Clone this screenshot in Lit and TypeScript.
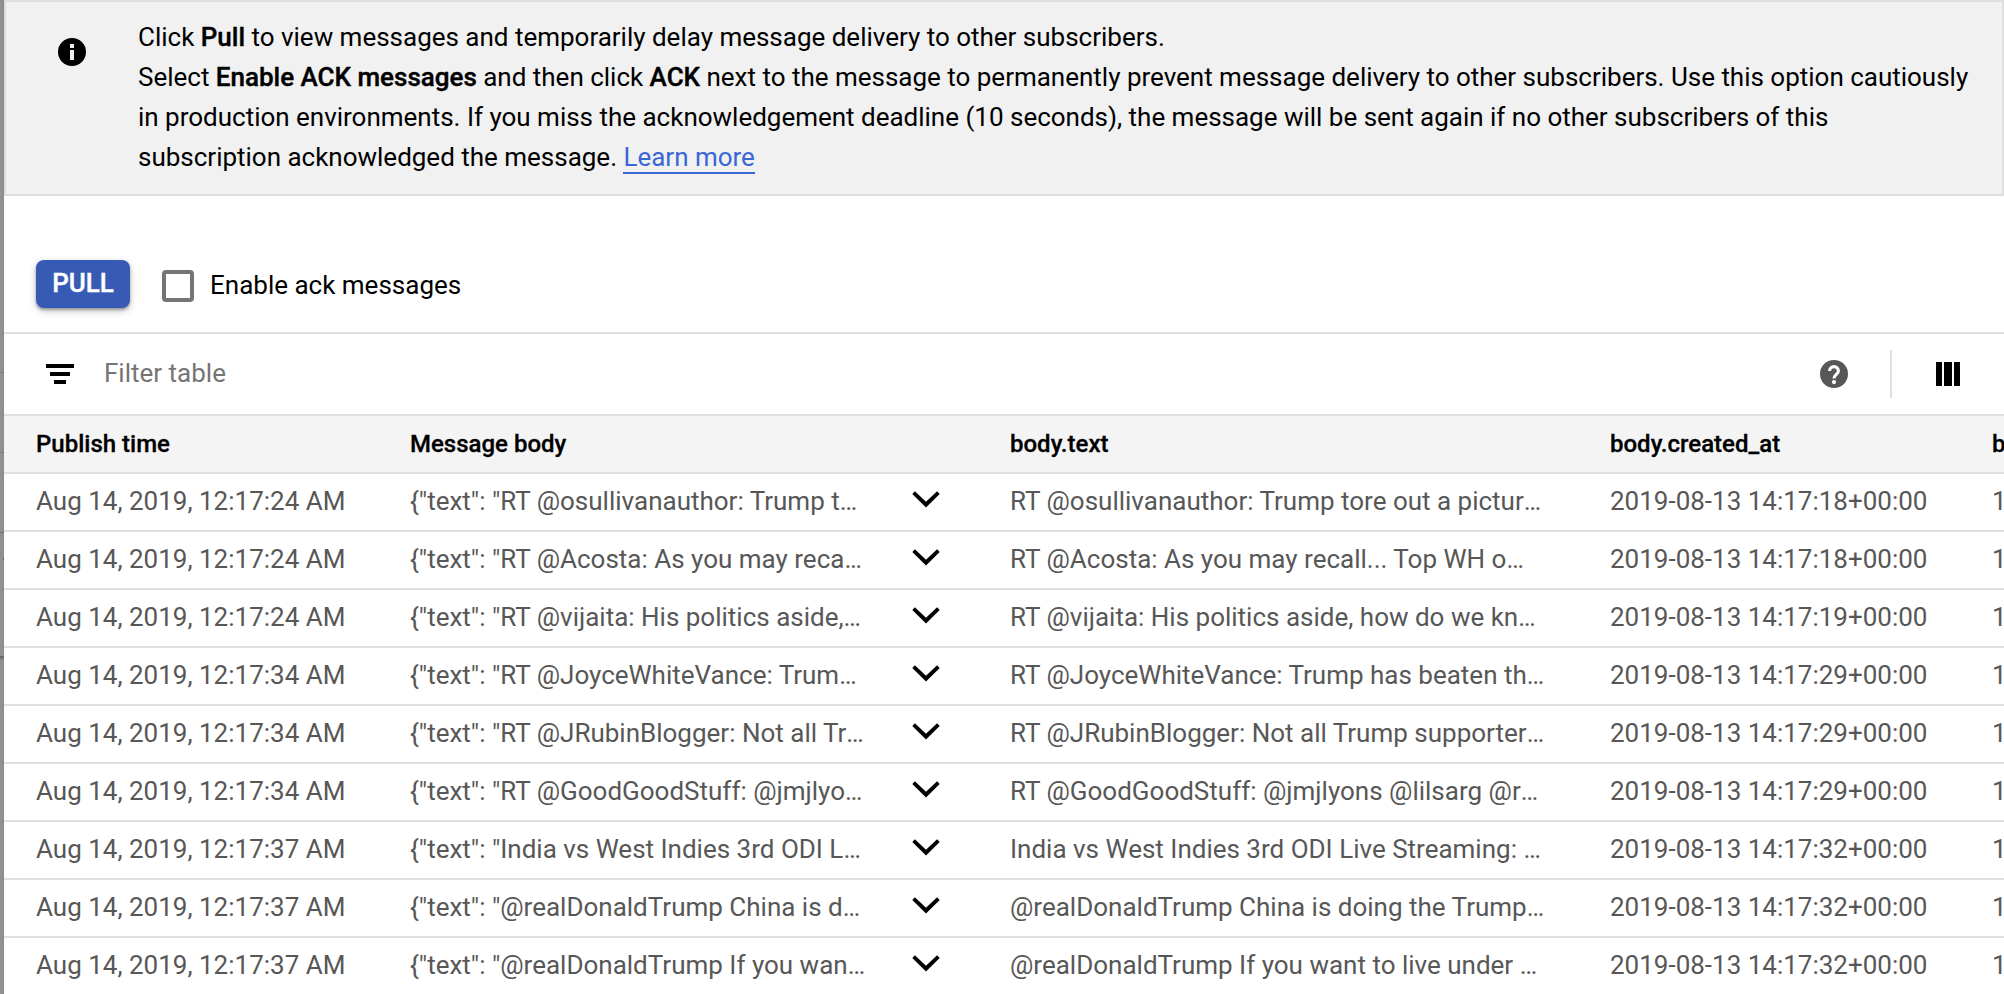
import { LitElement, html, svg, css } from "lit";
import { customElement, property } from "lit/decorators.js";

interface Message {
  time: string;
  body: string;
  text: string;
  created: string;
}

const MESSAGES: Message[] = [
  { time: "Aug 14, 2019, 12:17:24 AM", body: '{"text": "RT @osullivanauthor: Trump t', text: "RT @osullivanauthor: Trump tore out a pictur", created: "2019-08-13 14:17:18+00:00" },
  { time: "Aug 14, 2019, 12:17:24 AM", body: '{"text": "RT @Acosta: As you may reca', text: "RT @Acosta: As you may recall... Top WH o", created: "2019-08-13 14:17:18+00:00" },
  { time: "Aug 14, 2019, 12:17:24 AM", body: '{"text": "RT @vijaita: His politics aside,', text: "RT @vijaita: His politics aside, how do we kn", created: "2019-08-13 14:17:19+00:00" },
  { time: "Aug 14, 2019, 12:17:34 AM", body: '{"text": "RT @JoyceWhiteVance: Trum', text: "RT @JoyceWhiteVance: Trump has beaten th", created: "2019-08-13 14:17:29+00:00" },
  { time: "Aug 14, 2019, 12:17:34 AM", body: '{"text": "RT @JRubinBlogger: Not all Tr', text: "RT @JRubinBlogger: Not all Trump supporter", created: "2019-08-13 14:17:29+00:00" },
  { time: "Aug 14, 2019, 12:17:34 AM", body: '{"text": "RT @GoodGoodStuff: @jmjlyo', text: "RT @GoodGoodStuff: @jmjlyons @lilsarg @r", created: "2019-08-13 14:17:29+00:00" },
  { time: "Aug 14, 2019, 12:17:37 AM", body: '{"text": "India vs West Indies 3rd ODI L', text: "India vs West Indies 3rd ODI Live Streaming: ", created: "2019-08-13 14:17:32+00:00" },
  { time: "Aug 14, 2019, 12:17:37 AM", body: '{"text": "@realDonaldTrump China is d', text: "@realDonaldTrump China is doing the Trump", created: "2019-08-13 14:17:32+00:00" },
  { time: "Aug 14, 2019, 12:17:37 AM", body: '{"text": "@realDonaldTrump If you wan', text: "@realDonaldTrump If you want to live under ", created: "2019-08-13 14:17:32+00:00" },
];

const ICONS = {
  info: svg`<path fill-rule="evenodd" d="M18 4a14 14 0 1 0 0 28a14 14 0 0 0 0-28zM16 10h4v4h-4zM16 16h4v10h-4z"/>`,
  filter: svg`<path d="M4 8h28v4H4zM8 16h20v4H8zM12 24h12v4H12z"/>`,
  help: svg`<circle cx="18" cy="18" r="14"/><path d="M13.600 15a4.400 4.400 0 0 1 8.800 0c0 3.300-4.400 3.600-4.400 7.600" fill="none" stroke="#fff" stroke-width="3.100"/><circle cx="18" cy="26.100" r="2.100" fill="#fff"/>`,
  columns: svg`<path d="M6 6h6v24H6zM14 6h8v24h-8zM24 6h6v24h-6z"/>`,
  chevron: svg`<path d="M6.900 10.300L18 20.800L29.100 10.300L31.700 13L18 26.600L4.300 13z"/>`,
};

@customElement("app-icon")
class AppIcon extends LitElement {
  @property() name: keyof typeof ICONS = "info";
  static styles = css`
    :host { display: block; width: 36px; height: 36px; flex: none; }
    .glyph { display: block; fill: currentColor; }
  `;
  render() {
    return html`<svg class="glyph" width="36" height="36" viewBox="0 0 36 36">${ICONS[this.name]}</svg>`;
  }
}

@customElement("info-banner")
class InfoBanner extends LitElement {
  static styles = css`
    :host { display: block; }
    .banner {
      display: flex; box-sizing: border-box; height: 196px;
      border: 2px solid #dedede; background: #f1f1f1; padding: 15px 24px 0 48px; gap: 48px;
    }
    .icon { margin-top: 17px; }
    .copy { line-height: 40px; white-space: nowrap; letter-spacing: -0.01px; }
    .strong { font-weight: 500; -webkit-text-stroke: 0.4px currentColor; }
    .link { color: #3a67d6; text-decoration: none; display: inline-block; line-height: 30px; border-bottom: 2px solid #3a67d6; }
  `;
  render() {
    return html`<div class="banner">
      <app-icon class="icon" name="info"></app-icon>
      <div class="copy">
        <div>Click <b class="strong">Pull</b> to view messages and temporarily delay message delivery to other subscribers.</div>
        <div>Select <b class="strong">Enable ACK messages</b> and then click <b class="strong">ACK</b> next to the message to permanently prevent message delivery to other subscribers. Use this option cautiously</div>
        <div>in production environments. If you miss the acknowledgement deadline (10 seconds), the message will be sent again if no other subscribers of this</div>
        <div>subscription acknowledged the message. <a class="link">Learn more</a></div>
      </div>
    </div>`;
  }
}

@customElement("message-table")
class MessageTable extends LitElement {
  static styles = css`
    :host { display: block; }
    .row {
      display: grid; grid-template-columns: 374px 498px 102px 600px 382px 200px;
      box-sizing: border-box; height: 58px; padding-left: 32px; line-height: 54px;
      border-bottom: 2px solid #dfdfdf; color: #575757; white-space: pre;
    }
    .head {
      background: #f4f4f4; color: #000; font-size: 24px; font-weight: 500; line-height: 56px;
      -webkit-text-stroke: 0.3px currentColor;
    }
    .text { grid-column: 4; }
    .toggle { color: #000; margin-top: 7px; }
    .more { display: inline-block; }
  `;
  private clipped(value: string) {
    return html`<span>${value}<span class="more">…</span></span>`;
  }
  render() {
    return html`
      <div class="row head"><span>Publish time</span><span>Message body</span><span class="text">body.text</span><span>body.created_at</span><span>body.id</span></div>
      ${MESSAGES.map((m) => html`<div class="row"><span>${m.time}</span>${this.clipped(m.body)}<app-icon class="toggle" name="chevron"></app-icon>${this.clipped(m.text)}<span>${m.created}</span><span>1</span></div>`)}
    `;
  }
}

@customElement("app-root")
class AppRoot extends LitElement {
  static styles = css`
    :host {
      display: flex; height: 994px; overflow: hidden; background: #fff; color: #000;
      font: 400 26px Roboto, sans-serif;
    }
    .backdrop {
      flex: none; width: 4px;
      background:
        linear-gradient(#7e7d7c, #7e7d7c) 0 372px / 4px 1px no-repeat,
        linear-gradient(#7e7d7c, #7e7d7c) 0 452px / 4px 1px no-repeat,
        linear-gradient(#747372, #747372) 0 532px / 4px 1px no-repeat,
        linear-gradient(#5c5b5a, #5c5b5a) 3px 558px / 1px 2px no-repeat,
        linear-gradient(#656463, #7e7d7c) 0 656px / 4px 3px no-repeat,
        linear-gradient(to right, #949291, #8f8d8c);
    }
    .panel { flex: 1; min-width: 0; overflow: hidden; }
    .actions {
      display: flex; align-items: flex-start; box-sizing: border-box;
      height: 138px; padding: 64px 32px 0; border-bottom: 2px solid #dfdfdf;
    }
    .pull {
      box-sizing: border-box; width: 94px; height: 48px; padding: 0 0 2px; border: 0; border-radius: 8px;
      background: #375bb5; color: #fff; font: 500 26px/44px Roboto, sans-serif; text-align: center;
      -webkit-text-stroke: 0.4px currentColor;
      box-shadow: 0 2px 3px rgba(0,0,0,.3), 0 3px 8px rgba(0,0,0,.2);
    }
    .box {
      box-sizing: border-box; width: 32px; height: 32px; margin: 10px 16px 0 32px;
      border: 4px solid #757575; border-radius: 4px;
    }
    .label { line-height: 50px; }
    .filter {
      display: flex; align-items: center; box-sizing: border-box; height: 82px;
      padding: 0 38px; border-bottom: 2px solid #dfdfdf;
    }
    .hint { flex: 1; margin-left: 26px; color: #757575; line-height: 78px; margin-top: -2px; }
    .help { color: #575757; }
    .divider { width: 2px; height: 48px; margin: 0 38px; background: #e0e0e0; }
  `;
  render() {
    return html`
      <div class="backdrop"></div>
      <div class="panel">
        <info-banner></info-banner>
        <div class="actions">
          <button class="pull">PULL</button>
          <span class="box"></span>
          <span class="label">Enable ack messages</span>
        </div>
        <div class="filter">
          <app-icon name="filter"></app-icon>
          <span class="hint">Filter table</span>
          <app-icon class="help" name="help"></app-icon>
          <span class="divider"></span>
          <app-icon name="columns"></app-icon>
        </div>
        <message-table></message-table>
      </div>
    `;
  }
}
